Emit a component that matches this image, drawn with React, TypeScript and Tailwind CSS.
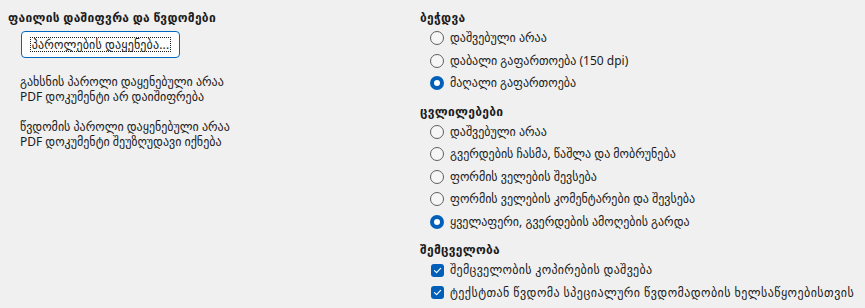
import React from "react";

const font = { fontFamily: '"Noto Sans", "DejaVu Sans", sans-serif' };

function Radio({ checked, label }: { checked?: boolean; label: string }) {
  return (
    <div className="flex h-[22.5px] items-center pl-[10px]">
      {checked ? (
        <span className="flex h-[14px] w-[14px] items-center justify-center rounded-full bg-[#005fb8]">
          <span className="h-[6px] w-[6px] rounded-full bg-white" />
        </span>
      ) : (
        <span className="h-[14px] w-[14px] rounded-full border border-[#5f5f5f] bg-[#f6f6f6]" />
      )}
      <span className="ml-[6px] text-[12px] leading-[16px] text-[#1b1b1b]">{label}</span>
    </div>
  );
}

function Check({ label, wide }: { label: string; wide?: boolean }) {
  return (
    <div className="flex h-[22.5px] items-center pl-[11px]">
      <span className="flex h-[13px] w-[13px] items-center justify-center rounded-[3px] bg-[#005fb8]">
        <svg width="9" height="9" viewBox="0 0 9 9" fill="none">
          <path d="M1.5 4.6 L3.6 6.6 L7.6 2.4" stroke="white" strokeWidth="1.2" strokeLinecap="round" strokeLinejoin="round" />
        </svg>
      </span>
      <span
        className={
          "ml-[6px] text-[12px] leading-[16px] text-[#1b1b1b] " + (wide ? "tracking-[0.45px]" : "tracking-[0.3px]")
        }
      >
        {label}
      </span>
    </div>
  );
}

function Heading({ children, className = "" }: { children: React.ReactNode; className?: string }) {
  return (
    <div className={"text-[12px] font-bold leading-[16px] tracking-[0.3px] text-[#1b1b1b] " + className}>
      {children}
    </div>
  );
}

export default function App() {
  return (
    <div className="flex h-[308px] w-[865px] bg-[#f0f0f0] pt-[10px]" style={font}>
      <div className="w-[420px] pl-[8px]">
        <Heading>ფაილის დაშიფვრა და წვდომები</Heading>
        <button className="ml-[13px] mt-[5px] flex h-[27px] w-[159px] items-center justify-center rounded-[4px] border border-[#0067c0] bg-[#fdfdfd] outline-none">
          <span className="border border-dotted border-[#1b1b1b] px-[1px] text-[12px] leading-[13px] tracking-[0.15px] text-[#1b1b1b]">
            პაროლების დაყენება...
          </span>
        </button>
        <div className="ml-[12px] mt-[16px] text-[12px] leading-[15px] text-[#1b1b1b]">
          <div>გახსნის პაროლი დაყენებული არაა</div>
          <div>PDF დოკუმენტი არ დაიშიფრება</div>
        </div>
        <div className="ml-[12px] mt-[15px] text-[12px] leading-[15px] text-[#1b1b1b]">
          <div>წვდომის პაროლი დაყენებული არაა</div>
          <div>PDF დოკუმენტი შეუზღუდავი იქნება</div>
        </div>
      </div>
      <div className="flex-1">
        <Heading>ბეჭდვა</Heading>
        <div className="mt-[1px]">
          <Radio label="დაშვებული არაა" />
          <Radio label="დაბალი გაფართოება (150 dpi)" />
          <Radio checked label="მაღალი გაფართოება" />
        </div>
        <Heading className="mt-[9px]">ცვლილებები</Heading>
        <div className="mt-[1px]">
          <Radio label="დაშვებული არაა" />
          <Radio label="გვერდების ჩასმა, წაშლა და მობრუნება" />
          <Radio label="ფორმის ველების შევსება" />
          <Radio label="ფორმის ველების კომენტარები და შევსება" />
          <Radio checked label="ყველაფერი, გვერდების ამოღების გარდა" />
        </div>
        <Heading className="mt-[9px]">შემცველობა</Heading>
        <div className="mt-[1px]">
          <Check label="შემცველობის კოპირების დაშვება" />
          <Check wide label="ტექსტთან წვდომა სპეციალური წვდომადობის ხელსაწყოებისთვის" />
        </div>
      </div>
    </div>
  );
}
